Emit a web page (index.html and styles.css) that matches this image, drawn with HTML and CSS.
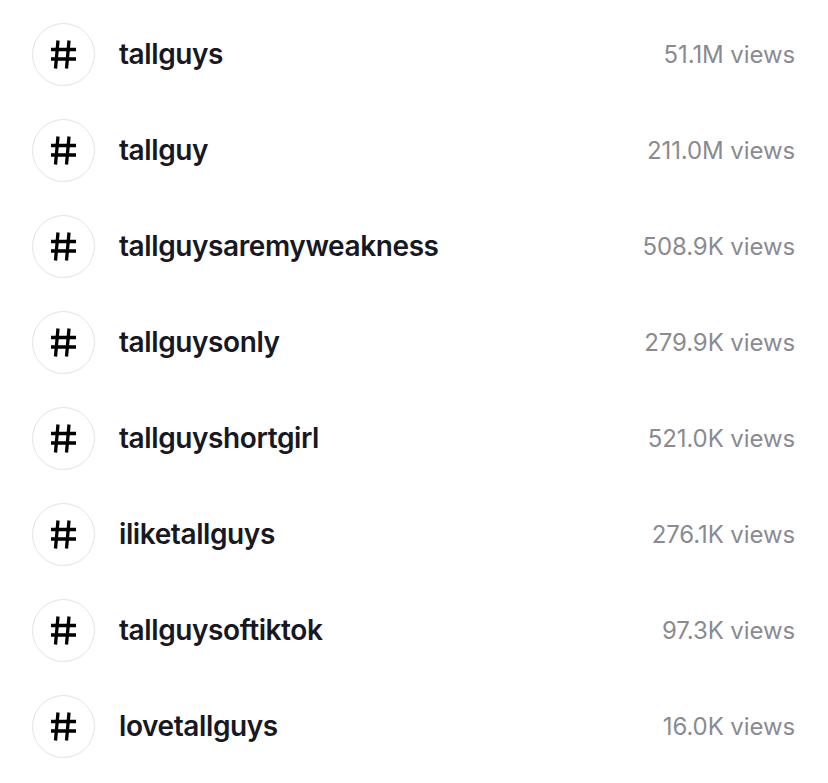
FILE: index.html
```html
<!DOCTYPE html>
<html>
<head>
<meta charset="utf-8">
<link rel="stylesheet" href="styles.css">
</head>
<body>
<ul class="list">
  <li class="row"><span class="icon"><svg viewBox="0 0 25 29" width="25" height="29"><path d="M7 0.5 L4.5 28.5 M18 0.5 L15.5 28.5 M0 9.5 H25 M0 19 H25" stroke="#000" stroke-width="3.3" fill="none"/></svg></span><span class="name">tallguys</span><span class="views">51.1M views</span></li>
  <li class="row"><span class="icon"><svg viewBox="0 0 25 29" width="25" height="29"><path d="M7 0.5 L4.5 28.5 M18 0.5 L15.5 28.5 M0 9.5 H25 M0 19 H25" stroke="#000" stroke-width="3.3" fill="none"/></svg></span><span class="name">tallguy</span><span class="views">211.0M views</span></li>
  <li class="row"><span class="icon"><svg viewBox="0 0 25 29" width="25" height="29"><path d="M7 0.5 L4.5 28.5 M18 0.5 L15.5 28.5 M0 9.5 H25 M0 19 H25" stroke="#000" stroke-width="3.3" fill="none"/></svg></span><span class="name">tallguysaremyweakness</span><span class="views">508.9K views</span></li>
  <li class="row"><span class="icon"><svg viewBox="0 0 25 29" width="25" height="29"><path d="M7 0.5 L4.5 28.5 M18 0.5 L15.5 28.5 M0 9.5 H25 M0 19 H25" stroke="#000" stroke-width="3.3" fill="none"/></svg></span><span class="name">tallguysonly</span><span class="views">279.9K views</span></li>
  <li class="row"><span class="icon"><svg viewBox="0 0 25 29" width="25" height="29"><path d="M7 0.5 L4.5 28.5 M18 0.5 L15.5 28.5 M0 9.5 H25 M0 19 H25" stroke="#000" stroke-width="3.3" fill="none"/></svg></span><span class="name">tallguyshortgirl</span><span class="views">521.0K views</span></li>
  <li class="row"><span class="icon"><svg viewBox="0 0 25 29" width="25" height="29"><path d="M7 0.5 L4.5 28.5 M18 0.5 L15.5 28.5 M0 9.5 H25 M0 19 H25" stroke="#000" stroke-width="3.3" fill="none"/></svg></span><span class="name">iliketallguys</span><span class="views">276.1K views</span></li>
  <li class="row"><span class="icon"><svg viewBox="0 0 25 29" width="25" height="29"><path d="M7 0.5 L4.5 28.5 M18 0.5 L15.5 28.5 M0 9.5 H25 M0 19 H25" stroke="#000" stroke-width="3.3" fill="none"/></svg></span><span class="name">tallguysoftiktok</span><span class="views">97.3K views</span></li>
  <li class="row"><span class="icon"><svg viewBox="0 0 25 29" width="25" height="29"><path d="M7 0.5 L4.5 28.5 M18 0.5 L15.5 28.5 M0 9.5 H25 M0 19 H25" stroke="#000" stroke-width="3.3" fill="none"/></svg></span><span class="name">lovetallguys</span><span class="views">16.0K views</span></li>
</ul>
</body>
</html>
```

FILE: styles.css
```css
html, body {
  margin: 0;
  padding: 0;
  background: #fff;
}
.list {
  list-style: none;
  margin: 0;
  padding: 6px 33px 0 32px;
}
.row {
  display: flex;
  align-items: center;
  height: 96px;
}
.icon {
  width: 61px;
  height: 61px;
  border: 1.5px solid #e3e3e4;
  border-radius: 50%;
  display: flex;
  align-items: center;
  justify-content: center;
  flex: none;
}
.icon svg {
  display: block;
}
.name {
  margin-left: 24px;
  flex: 1;
  font-family: Inter, sans-serif;
  font-weight: 600;
  font-size: 28px;
  letter-spacing: -0.4px;
  color: #161823;
}
.views {
  font-family: Inter, sans-serif;
  font-weight: 400;
  font-size: 24px;
  letter-spacing: -0.1px;
  color: #8a8b91;
}
```
